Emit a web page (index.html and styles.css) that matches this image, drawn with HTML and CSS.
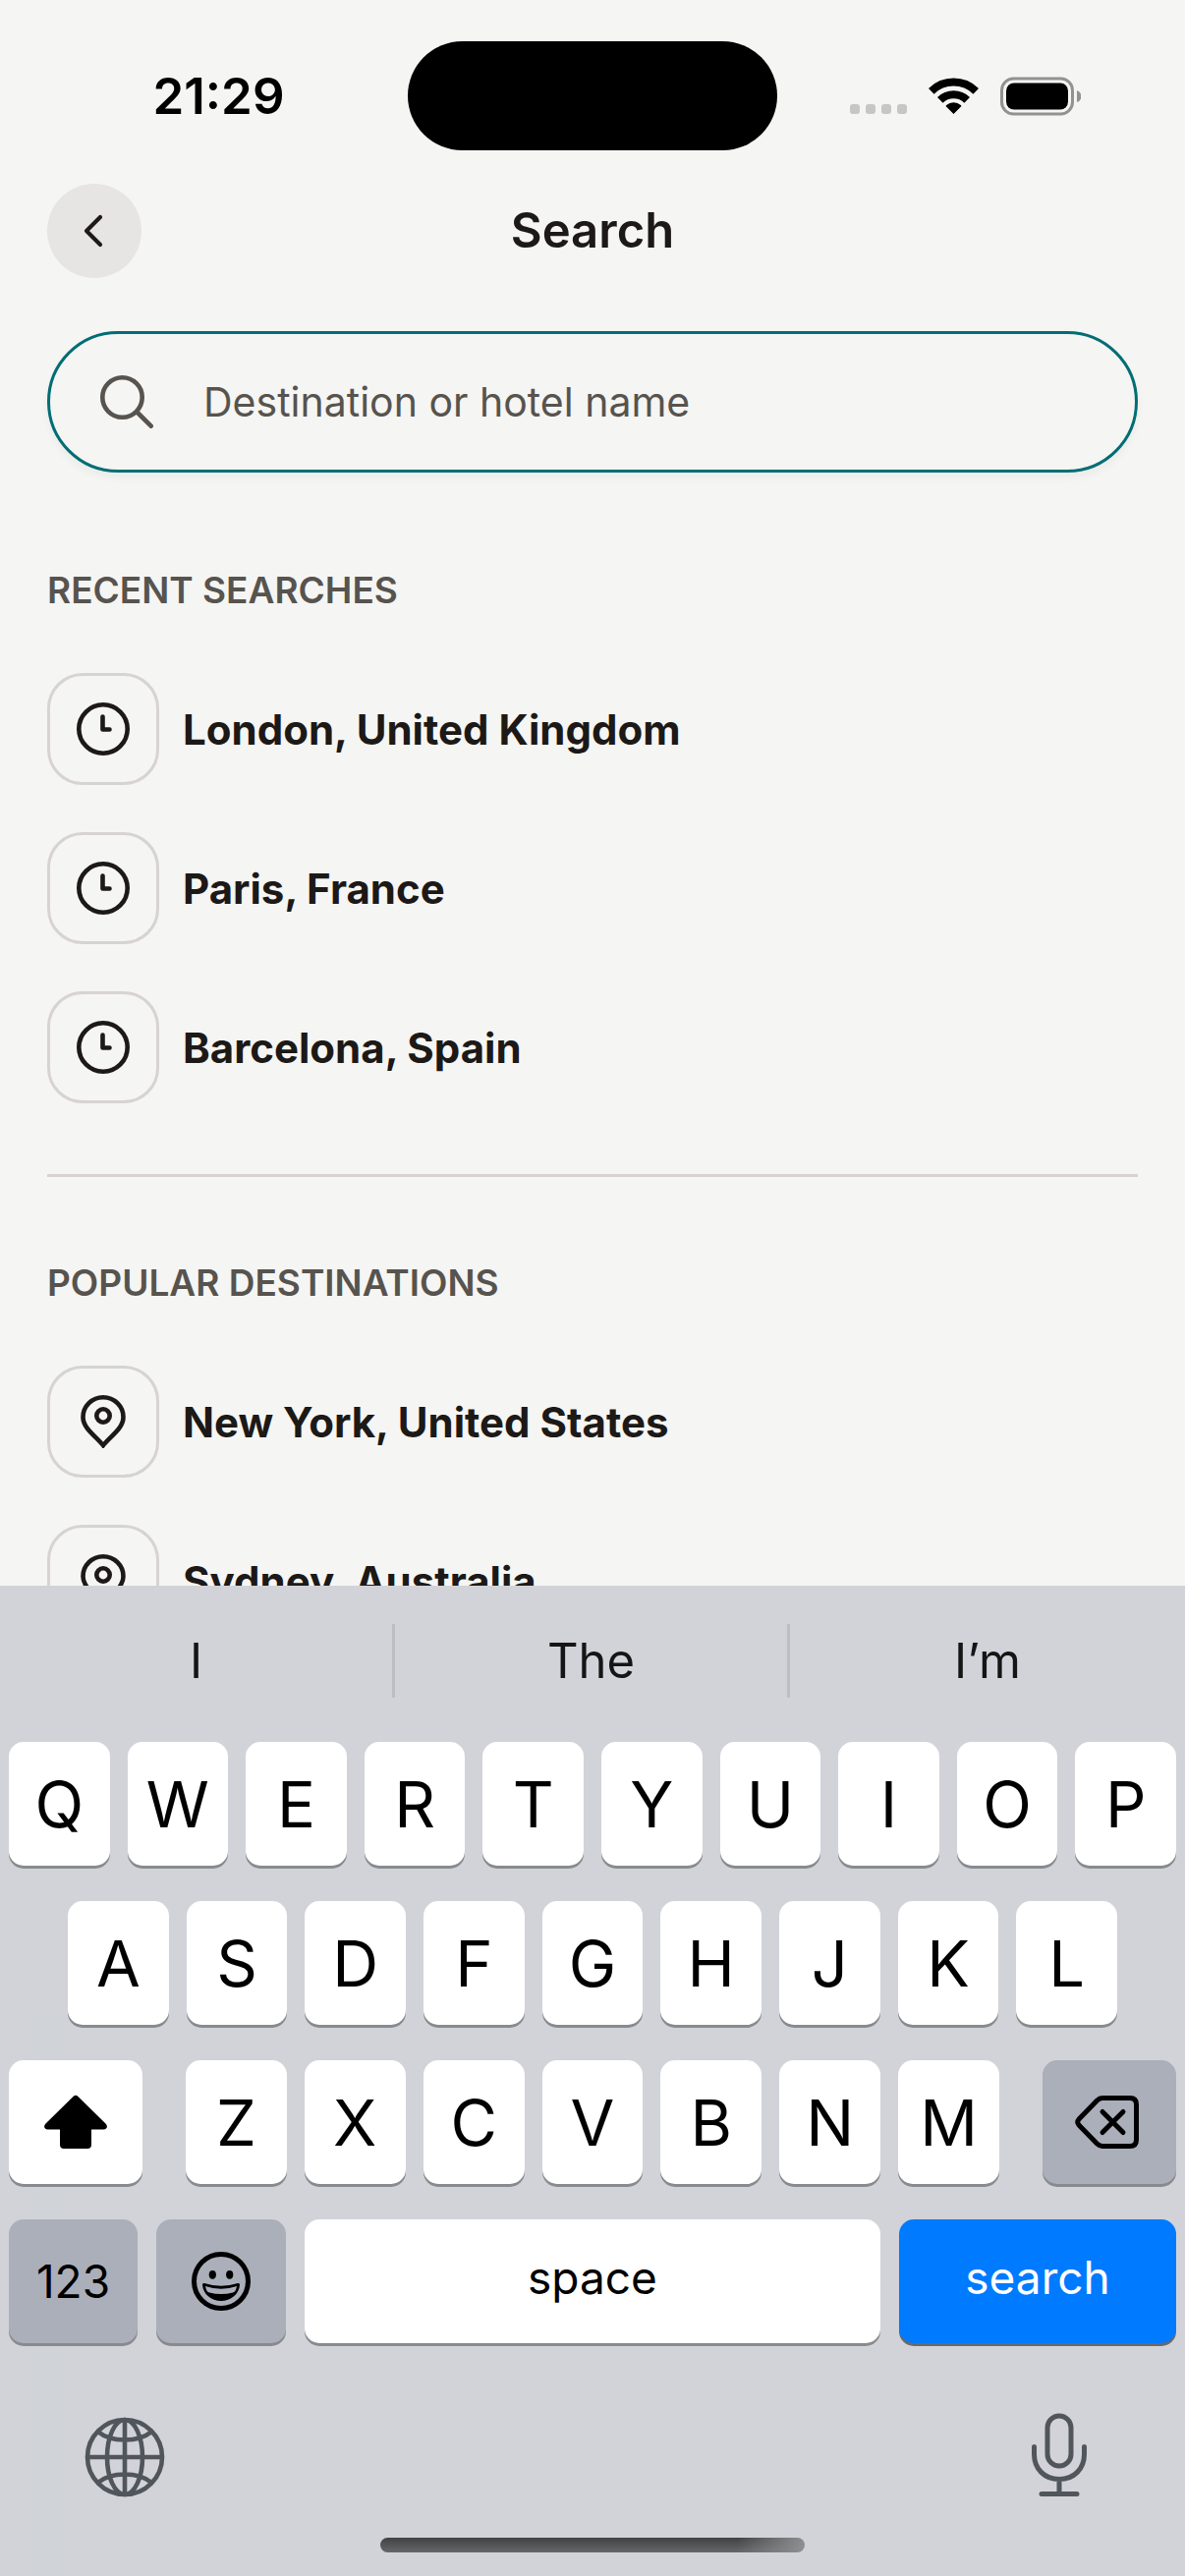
FILE: index.html
```html
<!DOCTYPE html>
<html lang="en">
<head>
<meta charset="utf-8">
<meta name="viewport" content="width=device-width, initial-scale=1">
<title>Search</title>
<link rel="stylesheet" href="styles.css">
</head>
<body>
<svg class="sprite" aria-hidden="true">
  <symbol id="clock" viewBox="0 0 54 54">
    <circle cx="27" cy="27" r="24.7" fill="none" stroke="currentColor" stroke-width="4.6"/>
    <path d="M26.5 14.500V27.500H33.500" fill="none" stroke="currentColor" stroke-width="4.6" stroke-linecap="round" stroke-linejoin="round"/>
  </symbol>
  <symbol id="pin" viewBox="0 0 54 54">
    <path d="M27 51.200C20 42 6.500 34 6.500 22.500a20.500 20.200 0 0 1 41 0C47.500 34 34 42 27 51.200Z" fill="none" stroke="currentColor" stroke-width="4.600"/>
    <circle cx="27" cy="21" r="6.700" fill="none" stroke="currentColor" stroke-width="4.600"/>
  </symbol>
</svg>

<div class="status-bar">
  <time class="clock-time">21:29</time>
  <div class="island"></div>
  <div class="indicators">
    <svg width="58" height="38" viewBox="0 0 58 38" fill="#c6c6c5"><rect y="27" width="10" height="10" rx="3"/><rect x="16" y="27" width="10" height="10" rx="3"/><rect x="32" y="27" width="10" height="10" rx="3"/><rect x="48" y="27" width="10" height="10" rx="3"/></svg>
    <svg width="51" height="38" viewBox="0 0 51 38">
      <path d="M2.800 13.800A32.500 32.500 0 0 1 48.200 13.800" fill="none" stroke="#000" stroke-width="8"/>
      <path d="M11.800 22.800A19.500 19.500 0 0 1 39.200 22.800" fill="none" stroke="#000" stroke-width="8"/>
      <path d="M25.500 37L18 29.500C17.500 29 17.500 28.600 18.200 28A11 11 0 0 1 32.800 28C33.500 28.600 33.500 29 33 29.500Z"/>
    </svg>
    <svg width="82" height="40" viewBox="0 0 82 40">
      <rect x="1.500" y="2" width="72" height="36" rx="12" fill="none" stroke="#929291" stroke-width="3"/>
      <rect x="6" y="6.500" width="63" height="27" rx="8"/>
      <path d="M78 14a6.300 6.300 0 0 1 0 12Z" fill="#929291"/>
    </svg>
  </div>
</div>

<header class="header">
  <button class="back" type="button" aria-label="Back">
    <svg width="24" height="36" viewBox="0 0 24 36"><path d="M18 4L4 18L18 32" fill="none" stroke="currentColor" stroke-width="4.200" stroke-linecap="round" stroke-linejoin="round"/></svg>
  </button>
  <h1 class="title">Search</h1>
</header>

<main class="content">
  <label class="search">
    <svg width="54" height="54" viewBox="0 0 54 54"><g fill="none" stroke="currentColor" stroke-width="4.600" stroke-linecap="round"><circle cx="22.500" cy="22.500" r="20.200"/><path d="M37.500 37.500L51.700 51.700"/></g></svg>
    <input class="search-input" type="text" placeholder="Destination or hotel name" aria-label="Destination or hotel name">
  </label>

  <section class="group">
    <h2 class="group-title">RECENT SEARCHES</h2>
    <ul class="places">
      <li><a class="place" href="#"><span class="place-icon"><svg width="54" height="54"><use href="#clock"/></svg></span>London, United Kingdom</a></li>
      <li><a class="place" href="#"><span class="place-icon"><svg width="54" height="54"><use href="#clock"/></svg></span>Paris, France</a></li>
      <li><a class="place" href="#"><span class="place-icon"><svg width="54" height="54"><use href="#clock"/></svg></span>Barcelona, Spain</a></li>
    </ul>
  </section>
  <hr class="divider">
  <section class="group">
    <h2 class="group-title">POPULAR DESTINATIONS</h2>
    <ul class="places">
      <li><a class="place" href="#"><span class="place-icon"><svg width="54" height="54"><use href="#pin"/></svg></span>New York, United States</a></li>
      <li><a class="place" href="#"><span class="place-icon"><svg width="54" height="54"><use href="#pin"/></svg></span>Sydney, Australia</a></li>
    </ul>
  </section>
</main>

<div class="keyboard">
  <div class="suggestions">
    <button class="suggestion" type="button">I</button>
    <button class="suggestion" type="button">The</button>
    <button class="suggestion" type="button">I’m</button>
  </div>
  <div class="keys">
    <div class="key-row">
      <button class="key" type="button">Q</button><button class="key" type="button">W</button><button class="key" type="button">E</button><button class="key" type="button">R</button><button class="key" type="button">T</button><button class="key" type="button">Y</button><button class="key" type="button">U</button><button class="key" type="button">I</button><button class="key" type="button">O</button><button class="key" type="button">P</button>
    </div>
    <div class="key-row key-row-home">
      <button class="key" type="button">A</button><button class="key" type="button">S</button><button class="key" type="button">D</button><button class="key" type="button">F</button><button class="key" type="button">G</button><button class="key" type="button">H</button><button class="key" type="button">J</button><button class="key" type="button">K</button><button class="key" type="button">L</button>
    </div>
    <div class="key-row key-row-shift">
      <button class="key key-side" type="button" aria-label="Shift"><svg width="64" height="56" viewBox="0 0 64 56"><path d="M29.500 2Q32 -0.500 34.500 2L62.500 29.500C65 32 64 35.500 60.500 35.500H48V51Q48 55 44 55H20Q16 55 16 51V35.500H3.500C0 35.500 -1 32 1.500 29.500Z"/></svg></button>
      <div class="letters">
        <button class="key" type="button">Z</button><button class="key" type="button">X</button><button class="key" type="button">C</button><button class="key" type="button">V</button><button class="key" type="button">B</button><button class="key" type="button">N</button><button class="key" type="button">M</button>
      </div>
      <button class="key key-side key-dim" type="button" aria-label="Delete"><svg width="70" height="56" viewBox="0 0 70 56"><g fill="none" stroke="#000" stroke-width="5" stroke-linecap="round" stroke-linejoin="round"><path d="M28 3.500H56Q62.500 3.500 62.500 10V46Q62.500 52.500 56 52.500H28Q25 52.500 22.500 50L4 31Q1.500 28 4 25L22.500 6Q25 3.500 28 3.500Z"/><path d="M28 17.500L49 38.500M49 17.500L28 38.500"/></g></svg></button>
    </div>
    <div class="key-row key-row-bottom">
      <button class="key key-word key-dim" type="button">123</button>
      <button class="key key-word key-dim" type="button" aria-label="Emoji"><svg width="60" height="60" viewBox="0 0 60 60"><circle cx="30" cy="30" r="27.500" fill="none" stroke="#000" stroke-width="5"/><ellipse cx="21.300" cy="23.300" rx="3.600" ry="4.400"/><ellipse cx="38.700" cy="23.300" rx="3.600" ry="4.400"/><path d="M11 33.500Q11 31.500 13 32Q30 37.500 47 32Q49 31.500 49 33.500C48.500 43 40 50 30 50S11.500 43 11 33.500ZM14 35Q14.500 38 16 40.500Q17 41.200 18 41.500Q30 44.500 42 41.500Q43 41.200 44 40.500Q45.500 38 46 35Q30 40.500 14 35Z" fill-rule="evenodd"/></svg></button>
      <button class="key key-word key-lower" type="button">space</button>
      <button class="key key-word key-lower key-primary" type="button">search</button>
    </div>
  </div>
  <div class="keyboard-tools">
    <button class="tool" type="button" aria-label="Next keyboard"><svg width="82" height="82" viewBox="0 0 82 82"><g fill="none" stroke="currentColor" stroke-width="4.600"><circle cx="41" cy="41" r="38"/><ellipse cx="41" cy="41" rx="18" ry="38"/><path d="M41 3V79M3 41H79M13.500 15Q24 23.500 41 23.500T68.500 15M13.500 67Q24 58.500 41 58.500T68.500 67"/></g></svg></button>
    <button class="tool" type="button" aria-label="Dictate"><svg width="58" height="86" viewBox="0 0 58 86"><g fill="none" stroke="currentColor" stroke-width="5" stroke-linecap="round"><rect x="17" y="3" width="24" height="51" rx="12"/><path d="M3.500 34.500V42C3.500 57 14 67.500 29 67.500S54.500 57 54.500 42V34.500M29 67.500V82.500M11 82.500H47"/></g></svg></button>
  </div>
  <div class="home-bar"></div>
</div>
</body>
</html>
```
FILE: styles.css
```css
* { box-sizing: border-box; }

body {
  margin: 0;
  height: 100vh;
  display: flex;
  flex-direction: column;
  overflow: hidden;
  background: #f5f5f3;
  color: #1c1917;
  font-family: Inter, "Liberation Sans", sans-serif;
}

button {
  margin: 0;
  padding: 0;
  border: 0;
  background: none;
  color: inherit;
  font: inherit;
}

svg { display: block; flex: none; }
.sprite { position: absolute; width: 0; height: 0; }

/* Status bar */
.status-bar {
  flex: none;
  display: grid;
  grid-template-columns: 1fr 376px 1fr;
  align-items: center;
  padding: 42px 0 34px;
}
.clock-time {
  padding-left: 30px;
  text-align: center;
  color: #000;
  font-size: 51px;
  font-weight: 600;
  line-height: 60px;
}
.island { height: 111px; border-radius: 56px; background: #000; }
.indicators {
  display: flex;
  justify-content: center;
  align-items: center;
  gap: 22px;
  padding-right: 32px;
}

/* Header */
.header {
  flex: none;
  display: grid;
  grid-template-columns: 96px 1fr 96px;
  align-items: center;
  padding: 0 48px;
}
.back {
  display: flex;
  align-items: center;
  justify-content: center;
  height: 96px;
  border-radius: 50%;
  background: #e7e5e4;
}
.title {
  margin: 0;
  text-align: center;
  font-size: 49px;
  font-weight: 600;
  line-height: 60px;
}

/* Content */
.content {
  flex: 1;
  min-height: 0;
  overflow: hidden;
  padding: 54px 48px 0;
}
.search {
  display: flex;
  align-items: center;
  gap: 51px;
  height: 144px;
  padding: 0 51px;
  border: 3px solid #006d75;
  border-radius: 72px;
  color: #57534e;
  box-shadow: 0 6px 9px rgba(0, 0, 0, 0.04);
}
.search-input {
  flex: 1;
  min-width: 0;
  padding: 0;
  border: 0;
  outline: 0;
  background: none;
  color: #1c1917;
  font: 400 41px/54px Inter, "Liberation Sans", sans-serif;
}
.search-input::placeholder { color: #57534e; opacity: 1; }

.group-title {
  margin: 0;
  padding: 96px 0 60px;
  color: #57534e;
  font-size: 37px;
  font-weight: 600;
  line-height: 48px;
}
.places {
  display: flex;
  flex-direction: column;
  gap: 48px;
  margin: 0;
  padding: 0;
  list-style: none;
}
.place {
  display: flex;
  align-items: center;
  gap: 24px;
  color: inherit;
  font-size: 42px;
  font-weight: 700;
  text-decoration: none;
}
.place-icon {
  display: flex;
  align-items: center;
  justify-content: center;
  width: 114px;
  height: 114px;
  border: 3px solid #d6d3d1;
  border-radius: 36px;
}
.divider {
  height: 3px;
  margin: 72px 0 -12px;
  border: 0;
  background: #d6d3d1;
}

/* Keyboard */
.keyboard {
  flex: none;
  padding: 39px 9px 24px;
  background: linear-gradient(#d0d4d9, #d0d4d9) 34px 100% / 29px 570px no-repeat #d2d3d9;
}
.suggestions {
  display: grid;
  grid-template-columns: 1fr 1fr 1fr;
  margin: 0 -9px;
  padding-bottom: 45px;
}
.suggestion {
  height: 75px;
  border-right: 3px solid #bdbec3;
  color: #151515;
  font-size: 49px;
}
.suggestion:last-child { border-right: 0; }
.keys { display: flex; flex-direction: column; gap: 36px; }
.key-row { display: flex; gap: 18px; }
.key-row-home { padding: 0 60px; }
.key-row-shift { gap: 44px; }
.key-row-bottom { display: grid; grid-template-columns: 131fr 132fr 586fr 282fr; gap: 19px; }
.letters { flex: 1; display: flex; gap: 18px; }
.key {
  flex: 1 1 0;
  min-width: 0;
  display: flex;
  align-items: center;
  justify-content: center;
  height: 126px;
  border-radius: 15px;
  background: #fff;
  box-shadow: 0 3px 0 #898a8d;
  color: #000;
  font-size: 65px;
}
.key-side { flex: none; width: 136px; }
.key-dim { background: #abafba; }
.key-word { font-size: 46px; }
.key-lower { padding-bottom: 8px; }
.key-primary { background: #007aff; color: #fff; box-shadow: 0 3px 0 #68696d; }

.keyboard-tools {
  display: flex;
  align-items: flex-end;
  justify-content: space-between;
  padding: 71px 90px 41px 77px;
}
.tool { color: #50565b; }
.home-bar {
  width: 432px;
  height: 15px;
  margin: 0 auto;
  border-radius: 8px;
  background: linear-gradient(90deg, transparent 84%, #8e8f93), linear-gradient(#404142, #66676b);
}
```
